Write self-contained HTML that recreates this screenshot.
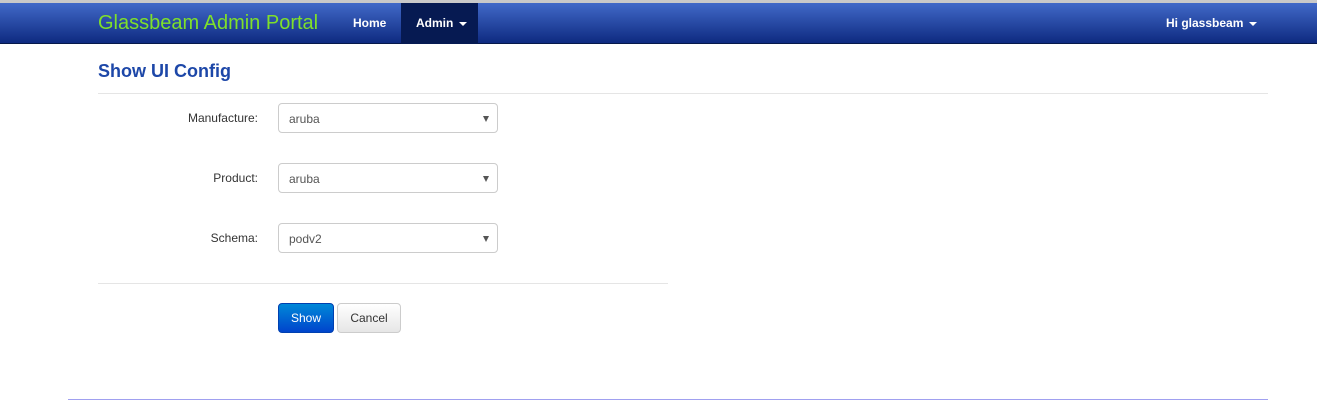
<!DOCTYPE html>
<html><head><meta charset="utf-8"><style>
*{box-sizing:border-box;margin:0;padding:0}
body{width:1317px;height:401px;background:#fff;font-family:"Liberation Sans",sans-serif;position:relative;overflow:hidden}
.top{position:absolute;left:0;top:0;width:1317px;height:3px;background:#c9c9c9}
.nav{position:absolute;left:0;top:3px;width:1317px;height:41px;background:linear-gradient(#4169c8,#0e2a80);border-bottom:1px solid #06184a}
.brand{position:absolute;left:98px;top:9px;font-size:20px;color:#7fe02a}
.nl{position:absolute;top:13px;font-size:12px;font-weight:bold;color:#fff}
.act{position:absolute;left:401px;top:0;width:77px;height:41px;background:#061a52}
.caret{display:inline-block;width:0;height:0;border-left:4px solid transparent;border-right:4px solid transparent;border-top:4px solid #fff;vertical-align:middle;margin-left:6px}
h1{position:absolute;left:98px;top:61px;font-size:18px;font-weight:bold;color:#1d47a8}
.hr{position:absolute;height:1px;background:#e5e5e5}
.lab{position:absolute;width:160px;left:98px;text-align:right;font-size:12px;color:#333}
.sel{position:absolute;left:278px;width:220px;height:30px;border:1px solid #ccc;border-radius:4px;font-size:12px;color:#555;padding:8px 10px}
.sel:after{content:"";position:absolute;right:8px;top:12px;border-left:3px solid transparent;border-right:3px solid transparent;border-top:6px solid #555}
.btn{position:absolute;top:303px;height:30px;border-radius:4px;font-size:12px;text-align:center;line-height:28px}
</style></head><body>
<div class="top"></div>
<div class="nav">
<div class="brand">Glassbeam Admin Portal</div>
<div class="nl" style="left:353px">Home</div>
<div class="act"></div>
<div class="nl" style="left:416px">Admin<span class="caret"></span></div>
<div class="nl" style="left:1166px">Hi glassbeam<span class="caret"></span></div>
</div>
<h1>Show UI Config</h1>
<div class="hr" style="left:98px;top:93px;width:1170px"></div>
<div class="lab" style="top:111px">Manufacture:</div>
<div class="sel" style="top:103px">aruba</div>
<div class="lab" style="top:171px">Product:</div>
<div class="sel" style="top:163px">aruba</div>
<div class="lab" style="top:231px">Schema:</div>
<div class="sel" style="top:223px">podv2</div>
<div class="hr" style="left:98px;top:283px;width:570px"></div>
<div class="btn" style="left:278px;width:56px;background:linear-gradient(#0088d8,#0044cc);color:#fff;border:1px solid #0040b0">Show</div>
<div class="btn" style="left:337px;width:64px;background:linear-gradient(#fff,#e6e6e6);color:#333;border:1px solid #ccc">Cancel</div>
<div class="hr" style="left:68px;top:399px;width:1200px;background:#a0a0f0"></div>
</body></html>
